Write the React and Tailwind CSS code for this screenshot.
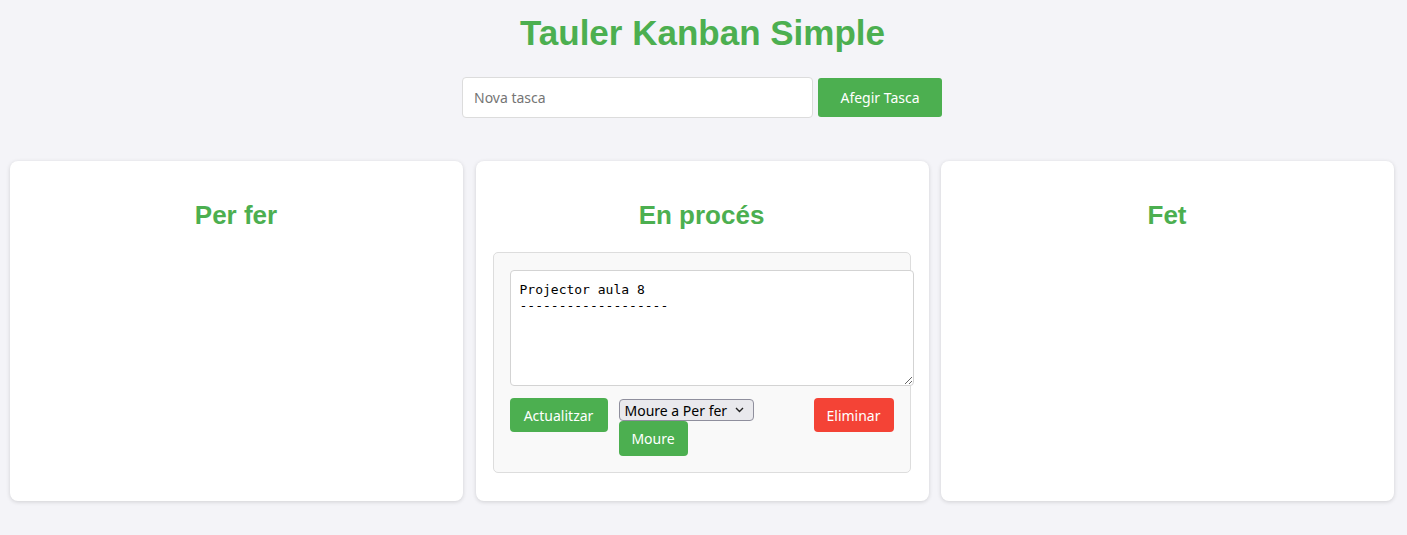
import React from "react";

function Column({ title, children }) {
  return (
    <div className="w-[453px] shrink-0 bg-white rounded-[8px] shadow-[0_1px_4px_rgba(0,0,0,0.15)] h-[340px] pl-[17px] pr-[18px] pt-[20px]">
      <h2 className="text-center text-[26px] font-bold text-[#4caf50] leading-[30px] mt-[19px] mb-[22px]" style={{ fontFamily: '"Liberation Sans", Arial, sans-serif' }}>
        {title}
      </h2>
      {children}
    </div>
  );
}

export default function App() {
  const ui = { fontFamily: '"Noto Sans", "Open Sans", sans-serif' };
  return (
    <div className="min-h-[535px] bg-[#f4f4f8]" style={ui}>
      <h1 className="text-center text-[35px] font-bold text-[#4caf50] leading-[40px] pt-[13px] pr-[2px]" style={{ fontFamily: '"Liberation Sans", Arial, sans-serif' }}>
        Tauler Kanban Simple
      </h1>
      <div className="flex justify-center items-center gap-[5px] mt-[24px] pr-[3px]">
        <input
          className="w-[351px] h-[41px] bg-white border border-[#dcdcdc] rounded-[4px] px-[11px] text-[14px] text-[#333] placeholder:text-[#757575] outline-none"
          placeholder="Nova tasca"
        />
        <button className="w-[124px] h-[39px] bg-[#4caf50] text-white text-[14px] rounded-[3px]">Afegir Tasca</button>
      </div>
      <div className="flex gap-[12.5px] pl-[10px] mt-[43px]">
        <Column title="Per fer" />
        <Column title="En procés">
          <div className="bg-[#f9f9f9] border border-[#dddddd] rounded-[5px] px-[16px] pt-[17px] pb-[16px]">
            <textarea
              className="block w-[404px] h-[116px] bg-white border border-[#d3d3d3] rounded-[4px] px-[9px] pt-[11px] pb-[10px] text-[13px] leading-[16px] text-black resize-y outline-none"
              style={{ fontFamily: '"DejaVu Sans Mono", monospace' }}
              defaultValue={"Projector aula 8\n-------------------"}
            />
            <div className="flex items-start mt-[12px]">
              <button className="h-[34px] w-[98px] bg-[#4caf50] text-white text-[14px] rounded-[4px]">Actualitzar</button>
              <div className="flex flex-col items-start ml-[11px] mt-[1px]">
                <div className="relative h-[22px] w-[135px] border border-[#8f8f9d] bg-[#e9e9ed] rounded-[4px] flex items-center pl-[5px] text-[14px] text-black">
                  <span>Moure a Per fer</span>
                  <svg className="absolute right-[9px] top-[7px]" width="9" height="6" viewBox="0 0 9 6">
                    <path d="M1 1 L4.5 4.5 L8 1" fill="none" stroke="#222" strokeWidth="1.4" />
                  </svg>
                </div>
                <button className="h-[35px] w-[69px] bg-[#4caf50] text-white text-[14px] rounded-[4px]">Moure</button>
              </div>
              <button className="ml-auto h-[34px] w-[80px] bg-[#f44336] text-white text-[14px] rounded-[4px]">Eliminar</button>
            </div>
          </div>
        </Column>
        <Column title="Fet" />
      </div>
    </div>
  );
}
